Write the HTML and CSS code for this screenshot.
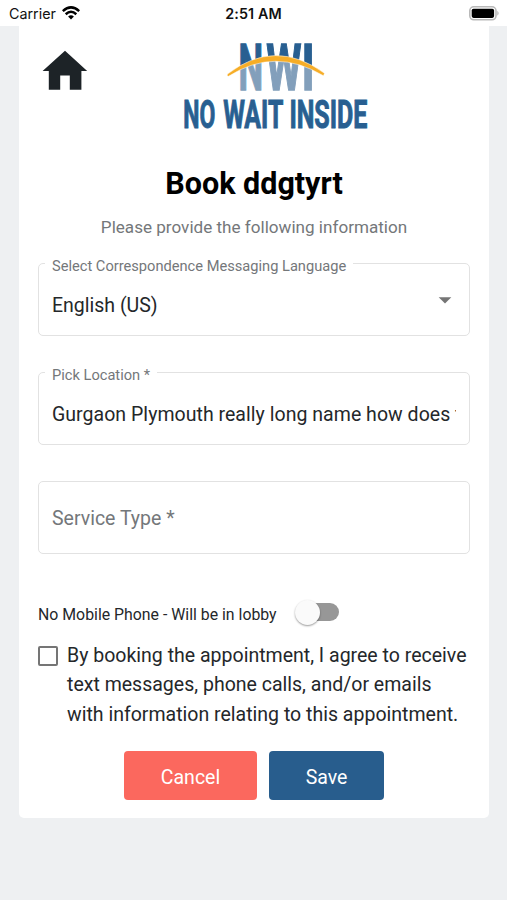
FILE: index.html
```html
<!DOCTYPE html>
<html lang="en">
<head>
<meta charset="utf-8">
<title>Book appointment</title>
<link rel="stylesheet" href="styles.css">
</head>
<body>
<header class="status">
  <div class="status-left">
    <span class="carrier">Carrier</span>
    <svg class="wifi" width="18" height="14" viewBox="0 0 18 14"><g fill="none" stroke="#000" stroke-width="2.5"><path d="M.8 5.1Q9-2.4 17.2 5.1"/><path d="M3.7 8.2Q9 3.4 14.3 8.2"/></g><path d="M6.1 10.4Q9 7.9 11.9 10.4L9 13.5Z"/></svg>
  </div>
  <span class="time">2:51 AM</span>
  <svg class="battery" width="31" height="15" viewBox="0 0 31 15"><rect x=".8" y=".8" width="26.2" height="13" rx="4" fill="#fff" stroke="#b9b9b9" stroke-width="1.6"/><rect x="2.7" y="2.7" width="22.4" height="9.2" rx="1.8"/><path d="M28.3 4.8Q31 7.3 28.3 9.8Z" fill="#b5b5b5"/></svg>
</header>
<main class="card">
  <div class="brand">
    <svg class="home" width="46" height="40" viewBox="0 0 46 40"><path fill="#1d2327" d="M23 .8 45.2 21H39.4V39.8H27.8V25.6H18.2V39.8H6.8V21H.6Z"/></svg>
    <svg class="logo" width="188" height="92" viewBox="0 0 188 92">
      <defs>
        <pattern id="two-tone" patternUnits="userSpaceOnUse" x="0" y="0" width="188" height="92">
          <path d="M0 0H188V92H0Z" fill="#829fbb"/>
          <path d="M0 0H188V60L142 35Q93 6 46 35L0 60Z" fill="#285f91"/>
        </pattern>
      </defs>
      <text class="logo-mark" y="50.4" fill="url(#two-tone)" stroke="url(#two-tone)"><tspan x="56.6" textLength="24.6" lengthAdjust="spacingAndGlyphs">N</tspan><tspan x="84.2" textLength="35.2" lengthAdjust="spacingAndGlyphs">W</tspan><tspan x="119.4" textLength="13.2" lengthAdjust="spacingAndGlyphs">I</tspan></text>
      <path d="M45.5 34Q93-2.5 142.5 33.2L141.5 35.8Q93 6.5 46.5 36.3Q44.5 36 45.5 34Z" fill="#f6ad27" stroke="#fff" stroke-width=".5"/>
      <text class="logo-name" y="88.4"><tspan x="1.3" textLength="32" lengthAdjust="spacingAndGlyphs">NO</tspan> <tspan x="41.2" textLength="59.4" lengthAdjust="spacingAndGlyphs">WAIT</tspan> <tspan x="107.4" textLength="78" lengthAdjust="spacingAndGlyphs">INSIDE</tspan></text>
    </svg>
  </div>
  <h1 class="title">Book ddgtyrt</h1>
  <p class="subtitle">Please provide the following information</p>
  <form class="form">
    <div class="field">
      <span class="label">Select Correspondence Messaging Language</span>
      <span class="value">English (US)</span>
      <svg class="caret" width="14" height="7" viewBox="0 0 14 7"><path d="M.7.3H13.3L7 6.6Z" fill="#757575"/></svg>
    </div>
    <div class="field">
      <span class="label">Pick Location *</span>
      <span class="value location">Gurgaon Plymouth really long name how does this</span>
    </div>
    <div class="field">
      <span class="value placeholder">Service Type *</span>
    </div>
    <div class="lobby">
      <span class="lobby-text">No Mobile Phone - Will be in lobby</span>
      <span class="switch"><span class="thumb"></span></span>
    </div>
    <div class="consent">
      <span class="checkbox"></span>
      <span class="consent-text">By booking the appointment, I agree to receive<br>text messages, phone calls, and/or emails<br>with information relating to this appointment.</span>
    </div>
    <div class="actions">
      <button class="button cancel" type="button">Cancel</button>
      <button class="button save" type="button">Save</button>
    </div>
  </form>
</main>
</body>
</html>
```
FILE: styles.css
```css
* { box-sizing: border-box; }
body { margin: 0; height: 900px; background: #eef0f2; font-family: Roboto, "Liberation Sans", sans-serif; color: #24272a; overflow: hidden; }
.status { height: 26px; padding: 0 7px 0 9px; background: #fff; display: grid; grid-template-columns: 1fr auto 1fr; align-items: center; color: #111; font-family: Inter, sans-serif; }
.status-left { display: flex; align-items: center; gap: 6px; }
.carrier { font-size: 14.3px; line-height: 18px; margin-top: 2px; }
.wifi { margin-top: -1px; }
.time { font-size: 14.3px; font-weight: 600; line-height: 18px; margin: 2px 2px 0 0; letter-spacing: .1px; }
.battery { justify-self: end; }
.card { width: 470px; height: 792px; margin: 0 0 0 19px; padding: 14px 19px 0; background: #fff; border-radius: 0 0 5px 5px; }
.brand { display: flex; height: 92px; }
.home { margin: 10px 0 0 4px; }
.logo { margin-left: 94px; overflow: visible; }
.logo-mark { font-size: 65px; font-weight: 700; stroke-width: 1.4px; }
.logo-name { font-size: 38.5px; font-weight: 700; fill: #285f91; stroke: #285f91; stroke-width: 1px; }
.title { margin: 34px 0 0; text-align: center; font-size: 30.5px; line-height: 36px; font-weight: 700; color: #000; }
.subtitle { margin: 14px 0 0; text-align: center; font-size: 17.1px; line-height: 22px; color: #74777a; }
.form { margin-top: 25px; }
.field { position: relative; height: 73px; margin-bottom: 36px; padding: 13px 13px 0; display: flex; align-items: center; border: 1.5px solid #e2e2e2; border-radius: 5px; }
.label { position: absolute; left: 6px; top: -8px; padding: 1px 7px 0; background: #fff; font-size: 14.65px; line-height: 18px; color: #74777a; white-space: nowrap; }
.value { flex: 1; overflow: hidden; white-space: nowrap; font-size: 19.5px; line-height: 26px; }
.location { letter-spacing: .035px; }
.placeholder { color: #74777a; margin-top: -10px; }
.caret { margin: -12px 4px 0 0; }
.lobby { display: flex; align-items: center; margin-top: 44px; height: 30px; }
.lobby-text { width: 239px; font-size: 15.85px; line-height: 20px; margin-top: 4px; white-space: nowrap; }
.switch { width: 42px; height: 18px; margin: -2px 0 0 20px; border-radius: 9px; background: #979797; display: flex; align-items: center; }
.thumb { flex: none; width: 25px; height: 25px; margin-left: -2px; border-radius: 50%; background: #fafafa; box-shadow: 0 1px 2px rgba(0,0,0,.4); }
.consent { display: flex; margin-top: 13px; }
.checkbox { flex: none; width: 20px; height: 20px; margin-top: 5px; border: 2px solid #757575; border-radius: 2px; }
.consent-text { margin-left: 9px; font-size: 19.53px; line-height: 29.3px; white-space: nowrap; }
.actions { display: flex; justify-content: center; gap: 12px; margin-top: 22px; }
.button { height: 49px; padding: 6px 0 0; border: 0; border-radius: 4px; color: #fff; font: 400 19.5px/24px Roboto, sans-serif; }
.cancel { width: 133px; background: #fb685e; }
.save { width: 115px; background: #285d8d; }
```
